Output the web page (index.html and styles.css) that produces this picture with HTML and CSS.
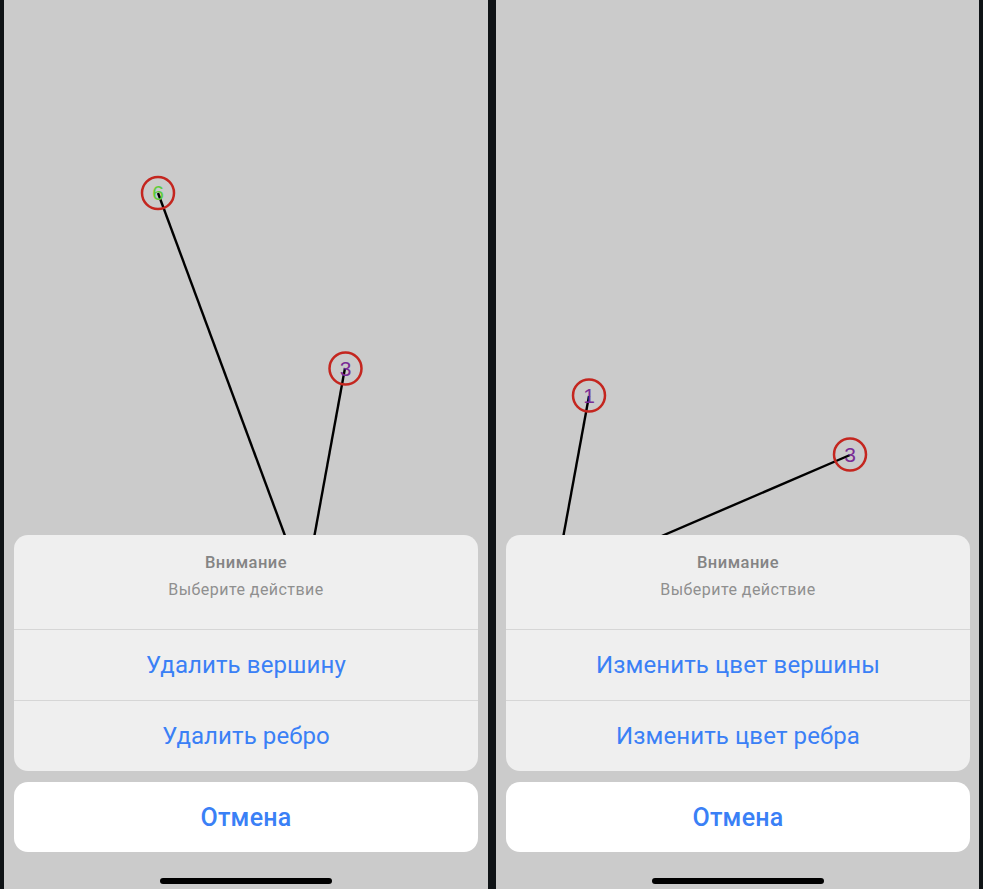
FILE: index.html
```html
<!DOCTYPE html>
<html lang="ru">
<head>
<meta charset="utf-8">
<link rel="stylesheet" href="styles.css">
</head>
<body>
<div class="screens">
  <section class="phone">
    <svg class="canvas" width="484" height="889" viewBox="0 0 484 889">
      <line x1="154" y1="193" x2="290" y2="560" class="edge"/>
      <line x1="341" y1="368" x2="306" y2="560" class="edge"/>
      <circle cx="154" cy="193" r="16" class="node"/>
      <text x="154" y="200" class="num green">6</text>
      <circle cx="341.5" cy="368.5" r="16" class="node"/>
      <text x="341.5" y="376" class="num purple">3</text>
    </svg>
    <div class="sheet">
      <div class="group">
        <div class="head">
          <div class="title">Внимание</div>
          <div class="subtitle">Выберите действие</div>
        </div>
        <div class="action">Удалить вершину</div>
        <div class="action">Удалить ребро</div>
      </div>
      <div class="cancel">Отмена</div>
    </div>
    <div class="home"></div>
  </section>
  <section class="phone">
    <svg class="canvas" width="483" height="889" viewBox="0 0 483 889">
      <line x1="93" y1="396" x2="63" y2="560" class="edge"/>
      <line x1="354" y1="455" x2="110" y2="560" class="edge"/>
      <circle cx="93" cy="395.5" r="16" class="node"/>
      <text x="93" y="403" class="num purple">1</text>
      <circle cx="354" cy="454.5" r="16" class="node"/>
      <text x="354" y="462" class="num purple">3</text>
    </svg>
    <div class="sheet">
      <div class="group">
        <div class="head">
          <div class="title">Внимание</div>
          <div class="subtitle">Выберите действие</div>
        </div>
        <div class="action">Изменить цвет вершины</div>
        <div class="action">Изменить цвет ребра</div>
      </div>
      <div class="cancel">Отмена</div>
    </div>
    <div class="home"></div>
  </section>
</div>
</body>
</html>
```

FILE: styles.css
```css
* { box-sizing: border-box; }
html, body { margin: 0; padding: 0; }
body {
  background: #0f1316;
  font-family: Roboto, "Noto Sans", "Liberation Sans", sans-serif;
  width: 983px;
  height: 889px;
  overflow: hidden;
}
.screens {
  display: grid;
  grid-template-columns: 484px 483px;
  column-gap: 8px;
  padding: 0 4px;
  height: 889px;
}
.phone {
  position: relative;
  background: #cbcbcb;
  height: 889px;
  display: flex;
  flex-direction: column;
  justify-content: flex-end;
  padding-bottom: 5px;
}
.canvas {
  position: absolute;
  left: 0;
  top: 0;
}
.edge {
  stroke: #000;
  stroke-width: 2.4;
}
.node {
  fill: none;
  stroke: #c4261f;
  stroke-width: 2.5;
}
.num {
  font-family: "Liberation Sans", Arial, sans-serif;
  font-size: 21px;
  text-anchor: middle;
}
.green { fill: #5dcb3b; }
.purple { fill: #7a2c95; }
.sheet {
  position: relative;
  width: 464px;
  margin-left: 10px;
  display: flex;
  flex-direction: column;
  gap: 11px;
}
.group {
  background: #efefef;
  border-radius: 14px;
  overflow: hidden;
}
.head {
  height: 95px;
  padding-top: 18px;
  text-align: center;
  border-bottom: 1px solid #d6d6d6;
}
.title {
  font-size: 16.5px;
  letter-spacing: 0.5px;
  line-height: 20px;
  font-weight: 500;
  color: #848484;
}
.subtitle {
  margin-top: 7px;
  font-size: 16px;
  letter-spacing: 0.45px;
  line-height: 20px;
  color: #8f8f8f;
}
.action {
  height: 71px;
  display: flex;
  align-items: center;
  justify-content: center;
  font-size: 24px;
  letter-spacing: 0.1px;
  color: #3a80f6;
  border-bottom: 1px solid #d6d6d6;
}
.action:last-child {
  height: 70px;
  border-bottom: none;
}
.cancel {
  height: 70px;
  background: #ffffff;
  border-radius: 14px;
  display: flex;
  align-items: center;
  justify-content: center;
  font-size: 25px;
  letter-spacing: 0.25px;
  font-weight: 500;
  color: #3a80f6;
}
.home {
  position: relative;
  width: 172px;
  height: 6px;
  margin: 26px 0 0 156px;
  background: #000;
  border-radius: 3px;
}
```
